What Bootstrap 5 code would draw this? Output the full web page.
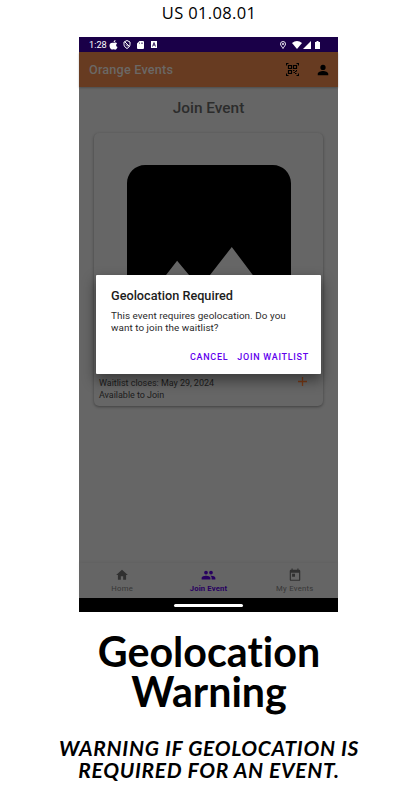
<!DOCTYPE html>
<html lang="en">
<head>
<meta charset="utf-8">
<meta name="viewport" content="width=device-width, initial-scale=1">
<title>Geolocation Warning</title>
<link href="https://cdn.jsdelivr.net/npm/bootstrap@5.3.0/dist/css/bootstrap.min.css" rel="stylesheet">
<style>
body{background:#fff;color:#000;height:790px;overflow:hidden}
svg{display:block;flex:none}
.story-id{font:400 16.5px/20px "Open Sans",sans-serif;letter-spacing:.35px;height:37px;padding-top:3px}
.phone{width:259px;height:575px;margin-right:1px;background:#666;font-family:Roboto,sans-serif}
.status-bar{height:15px;background:#1a0048;color:#fff;font-size:9.2px;line-height:15px;padding:0 18px 0 10px}
.app-bar{height:35px;background:#673b21;box-shadow:0 1px 2px rgba(0,0,0,.25);padding:0 8px 0 10px}
.app-title{font-size:12.7px;font-weight:500;letter-spacing:.17px;color:#6b6865}
.page-title{font-size:15.4px;font-weight:500;line-height:20px;color:#2c2c2c;margin-top:11px}
.event-card{width:229px;height:273px;margin-top:15px;border-radius:5px;background:#666;box-shadow:0 1px 3px rgba(0,0,0,.38)}
.event-pic{margin-top:32px}
.event-info{font-size:9px;line-height:12px;letter-spacing:-.04px;color:#1c1c1c;padding:0 15px 5px 5px}
.plus-mark{margin-top:-1px}
.dialog-box{left:17px;top:238px;width:225px;height:99px;background:#fff;border-radius:1px;padding:14px 12px 0 15px;box-shadow:0 6px 13px 1px rgba(0,0,0,.42)}
.dialog-title{font-size:12.7px;font-weight:500;line-height:14px;color:#1c1c1c}
.dialog-text{font-size:9.9px;line-height:12px;color:#2a2a2a;margin-top:7px;letter-spacing:.06px}
.dialog-actions{margin-top:17px;gap:9px}
.dialog-btn{font-size:9px;font-weight:500;line-height:12px;letter-spacing:.72px;color:#6200ee;border:0;background:none;padding:0}
.bottom-nav{height:35px;background:#656565;box-shadow:0 -1px 3px rgba(0,0,0,.05);font-size:7.7px;line-height:9px;letter-spacing:.27px;color:#363636}
.tab-item{padding-top:5px;gap:2px}
.tab-on{color:#270060;font-weight:700;letter-spacing:.15px}
.gesture-bar{height:14px;background:#000}
.gesture-pill{width:69px;height:3px;border-radius:2px;background:#fff}
.headline{font:700 41.2px/40px Lato,sans-serif;font-variant-ligatures:none;letter-spacing:0;margin-top:19px}
.caption-line{font:italic 700 21px/22px Lato,sans-serif;letter-spacing:.68px;margin-top:26px}
</style>
</head>
<body class="d-flex flex-column align-items-center">
<div class="story-id text-center">US 01.08.01</div>
<main class="phone position-relative d-flex flex-column">
  <div class="status-bar d-flex align-items-center">
    <span>1:28</span>
    <svg width="9" height="10" viewBox="0 0 18 20" fill="#fff" style="margin-left:2px"><path d="M9 6c3-2 6-1 7 1-3 2-2 6 1 7-1 4-4 6-6 5q-2-1-4 0C4 20 1 15 1 11c0-4 4-7 8-5zM9 5c0-3 2-5 4-5 0 3-2 5-4 5z"/></svg>
    <svg width="8" height="9" viewBox="0 0 16 18" fill="none" stroke="#fff" stroke-width="2" style="margin-left:5px"><path d="M8 1l6 3v5c0 4-3 6-6 8-3-2-6-4-6-8V4zM4 4l9 9M6 9l4 4"/></svg>
    <svg width="7" height="8" viewBox="0 0 14 16" fill="#fff" style="margin-left:6px"><path fill-rule="evenodd" d="M5 0h7q2 0 2 2v12q0 2-2 2H2q-2 0-2-2V5zM5 3v3h1V3zm3 0v3h1V3zm3 0v3h1V3z"/></svg>
    <svg width="6" height="7" viewBox="0 0 12 14" style="margin-left:7px"><path fill="#fff" d="M0 0h12v14H0z"/><path d="M3 11l3-8 3 8M4 8h4" fill="none" stroke="#1a0048" stroke-width="1.6"/></svg>
    <svg width="6" height="8" viewBox="0 0 12 16" class="ms-auto" fill="none" stroke="#fff" stroke-width="1.8"><path d="M6 15C4 11 1 9 1 6a5 5 0 0110 0c0 3-3 5-5 9z"/><circle cx="6" cy="6" r="1.2" fill="#fff"/></svg>
    <svg width="10" height="8" viewBox="0 0 20 16" fill="#fff" style="margin-left:6px"><path d="M0 4q10-8 20 0L10 16z"/></svg>
    <svg width="8" height="8" viewBox="0 0 16 16" fill="#fff" style="margin-left:1px"><path d="M16 0v16H0z"/></svg>
    <svg width="5" height="8" viewBox="0 0 10 16" fill="#fff" style="margin-left:4px"><path d="M3 0h4v2h3v14H0V2h3z"/></svg>
  </div>
  <header class="app-bar d-flex align-items-center">
    <span class="app-title">Orange Events</span>
    <svg class="ms-auto" width="13" height="13" viewBox="0 0 26 26" fill="none" stroke="#000" stroke-width="2.400"><path d="M1 5V1h4M21 1h4v4M1 21v4h4M25 21v4h-4M5 5h6v6H5zM15 5h6v6h-6zM5 15h6v6H5z"/><path d="M14 15h3M18 17h3M15 19h3M18 21h3M20 15h2"/></svg>
    <svg width="14" height="14" viewBox="0 0 24 24" fill="#000" style="margin-left:17px"><path d="M12 12a4.500 4.500 0 100-9 4.500 4.500 0 000 9zm0 1.500c-4 0-9 2-9 5V21h18v-2.500c0-3-5-5-9-5z"/></svg>
  </header>
  <h1 class="page-title text-center mb-0">Join Event</h1>
  <section class="event-card mx-auto d-flex flex-column">
    <svg class="event-pic mx-auto" width="164" height="164" viewBox="0 0 18 18"><path fill-rule="evenodd" d="M18 16V2c0-1.100-.9-2-2-2H2C.9 0 0 .9 0 2v14c0 1.100.9 2 2 2h14c1.100 0 2-.9 2-2zM5.500 10.500l2.500 3.010L11.500 9l4.500 6H2z"/></svg>
    <div class="event-info d-flex justify-content-between mt-auto">
      <div><div>Waitlist closes: May 29, 2024</div><div>Available to Join</div></div>
      <svg class="plus-mark" width="11" height="11" viewBox="0 0 11 11" stroke="#7a3a16" stroke-width="1.300"><path d="M5.500 1v9M1 5.500h9"/></svg>
    </div>
  </section>
  <nav class="bottom-nav d-flex mt-auto">
    <div class="tab-item d-flex flex-column align-items-center col-4">
      <svg width="14" height="14" viewBox="0 0 24 24" fill="#303030"><path d="M10 20v-6h4v6h5v-8h3L12 3 2 12h3v8z"/></svg><span>Home</span></div>
    <div class="tab-item tab-on d-flex flex-column align-items-center col-4">
      <svg width="15" height="14" viewBox="0 0 24 22" fill="#270060"><path d="M16 10a3 3 0 100-6 3 3 0 000 6zm-8 0a3 3 0 100-6 3 3 0 000 6zm0 2c-2.300 0-7 1.200-7 3.500V18h14v-2.500C15 13.200 10.300 12 8 12zm8 0h-1c1.200.8 2 2 2 3.500V18h6v-2.500c0-2.300-4.700-3.500-7-3.500z"/></svg><span>Join Event</span></div>
    <div class="tab-item d-flex flex-column align-items-center col-4">
      <svg width="14" height="14" viewBox="0 0 24 24" fill="#303030"><path fill-rule="evenodd" d="M19 3h-1V1h-2v2H8V1H6v2H5a2 2 0 00-2 2v15a2 2 0 002 2h14a2 2 0 002-2V5a2 2 0 00-2-2zm0 17H5V8h14zM7 10h5v5H7z"/></svg><span>My Events</span></div>
  </nav>
  <div class="gesture-bar d-flex align-items-center justify-content-center"><div class="gesture-pill"></div></div>
  <div class="dialog-box position-absolute" role="dialog">
    <div class="dialog-title">Geolocation Required</div>
    <div class="dialog-text">This event requires geolocation. Do you<br>want to join the waitlist?</div>
    <div class="dialog-actions d-flex justify-content-end">
      <button class="dialog-btn">CANCEL</button><button class="dialog-btn">JOIN WAITLIST</button>
    </div>
  </div>
</main>
<h2 class="headline text-center mb-0">Geolocation<br>Warning</h2>
<p class="caption-line text-center mb-0">WARNING IF GEOLOCATION IS<br>REQUIRED FOR AN EVENT.</p>
</body>
</html>
